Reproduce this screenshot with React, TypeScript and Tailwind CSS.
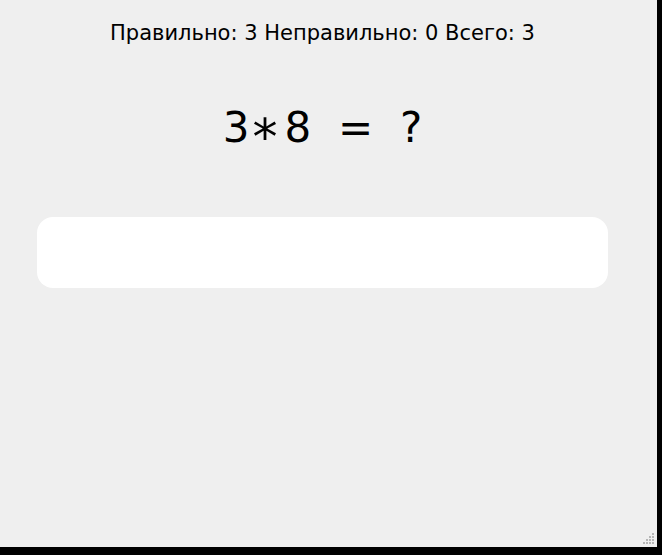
export default function App() {
  return (
    <div className="h-[555px] w-[662px] bg-black">
      <div
        className="relative h-[547px] w-[657px] bg-[#efefef] text-black"
        style={{ fontFamily: '"DejaVu Sans", sans-serif' }}
      >
        <div className="flex w-[645px] flex-col items-center">
          <div className="mt-[19px] text-[21px] leading-[28px]">Правильно: 3 Неправильно: 0 Всего: 3</div>
          <div className="mt-[56px] whitespace-pre text-[42px] leading-[50px]">
            3<span className="relative top-[12px] ml-[3px] mr-[7px] text-[50px] leading-[0]">*</span>8{'  =  ?'}
          </div>
          <div className="mt-[64px] h-[71px] w-[571px] rounded-[16px] bg-white" />
        </div>
        <div className="absolute bottom-[3px] right-[3px] grid grid-cols-4 gap-[1px]">
          {[0, 0, 0, 1, 0, 0, 1, 1, 0, 1, 1, 1, 1, 1, 1, 1].map((v, i) => (
            <div key={i} className={v ? 'h-[2px] w-[2px] bg-[#b5b5b5]' : 'h-[2px] w-[2px]'} />
          ))}
        </div>
      </div>
    </div>
  )
}
